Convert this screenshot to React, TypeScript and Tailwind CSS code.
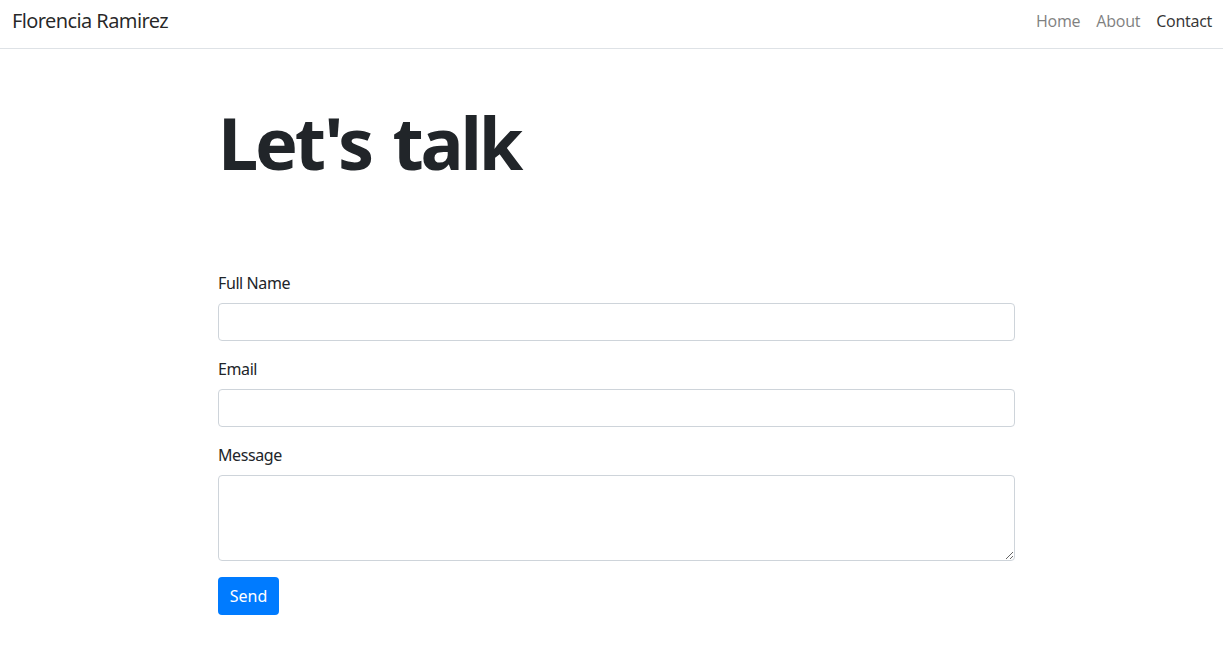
export default function App() {
  return (
    <div className="min-h-screen bg-white text-[#212529]" style={{ fontFamily: '"Noto Sans", "Open Sans", sans-serif' }}>
      <nav className="flex h-[49px] items-center justify-between border-b border-[#dee2e6] pb-[6px] pl-3 pr-[11px]">
        <a className="text-[20px] leading-[30px] tracking-[-0.6px] text-black/85">Florencia Ramirez</a>
        <div className="flex gap-4 text-[16px] leading-6 tracking-[-0.3px]">
          <a className="text-black/50">Home</a>
          <a className="text-black/50">About</a>
          <a className="text-black/80">Contact</a>
        </div>
      </nav>

      <main className="pl-[218px] pt-[50px]">
        <div className="w-[797px]">
          <h1 className="text-[72px] font-bold leading-[86px] tracking-[-3.2px] text-[#212529] [word-spacing:6px]">
            Let's talk
          </h1>

          <form className="mt-[86px] tracking-[-0.4px]">
            <div className="mb-4">
              <label className="mb-2 block text-[16px] leading-6">Full Name</label>
              <input type="text" className="block h-[38px] w-full rounded border border-[#ced4da] px-3" />
            </div>
            <div className="mb-4">
              <label className="mb-2 block text-[16px] leading-6">Email</label>
              <input type="email" className="block h-[38px] w-full rounded border border-[#ced4da] px-3" />
            </div>
            <div className="mb-4">
              <label className="mb-2 block text-[16px] leading-6">Message</label>
              <textarea rows={3} className="block h-[86px] w-full rounded border border-[#ced4da] px-3 py-1.5" />
            </div>
            <button type="button" className="h-[38px] w-[61px] rounded bg-[#007bff] text-[16px] leading-6 tracking-normal text-white">
              Send
            </button>
          </form>
        </div>
      </main>
    </div>
  );
}
